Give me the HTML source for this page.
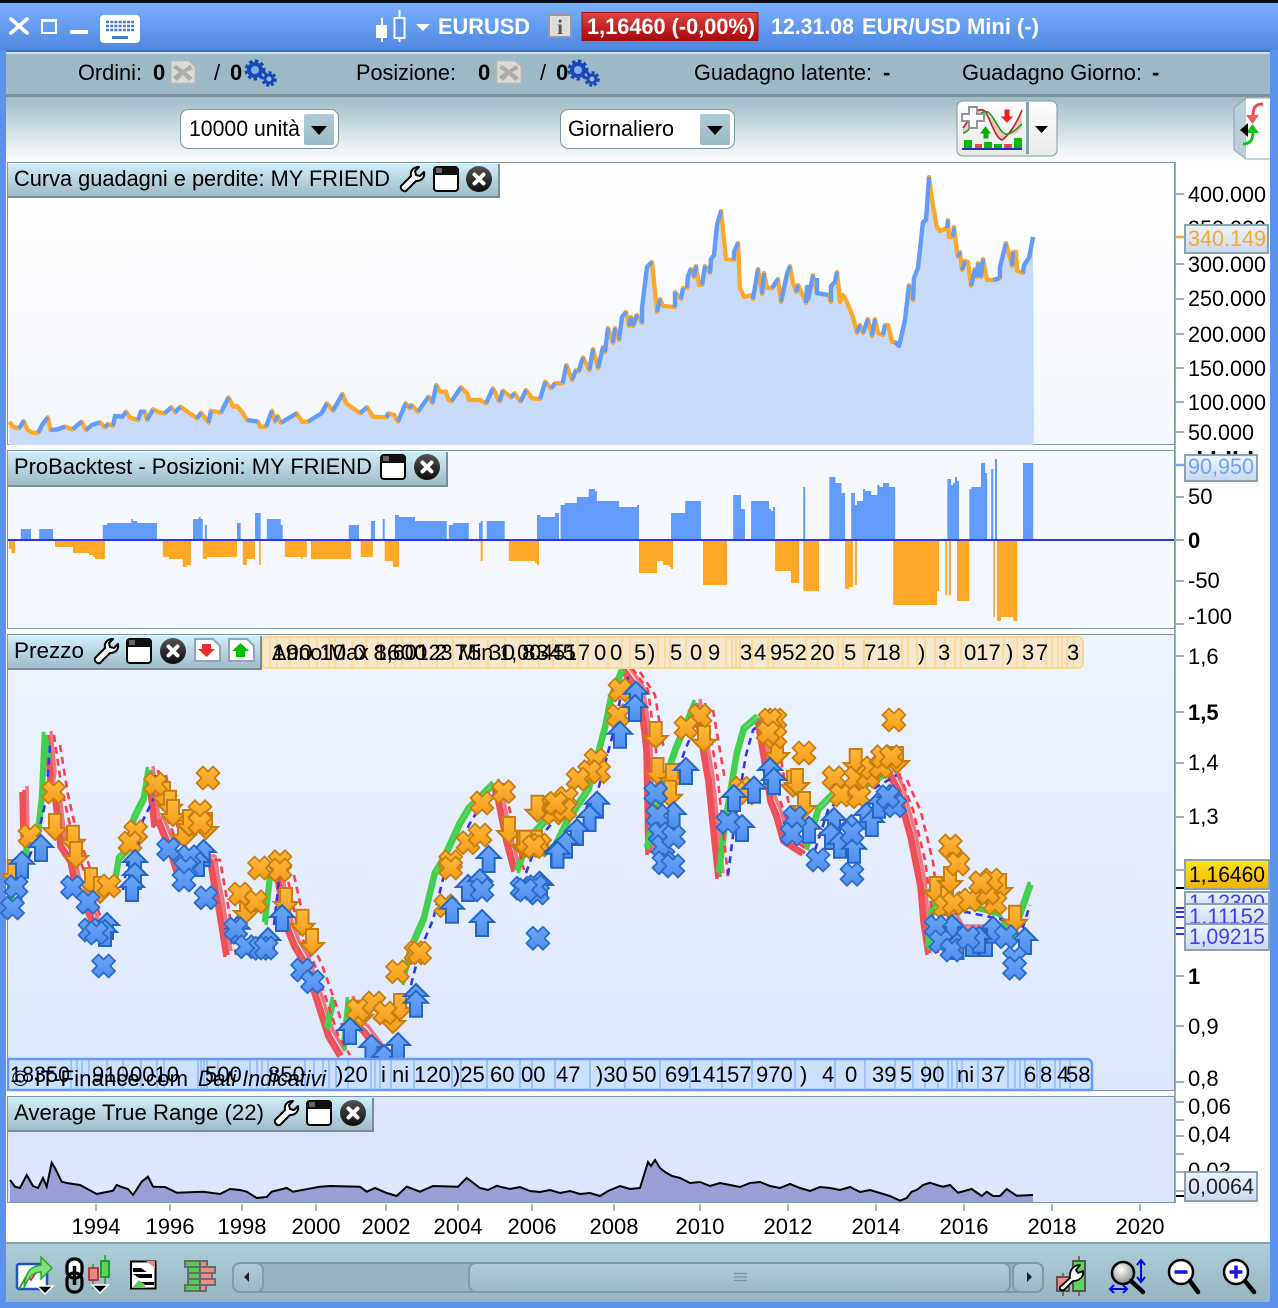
<!DOCTYPE html>
<html><head><meta charset="utf-8"><title>EURUSD</title>
<style>
html,body{margin:0;padding:0;background:#fff;width:1278px;height:1308px;overflow:hidden}
svg{display:block}
text{font-family:"Liberation Sans",sans-serif;font-size:22px;fill:#000}
.b{font-weight:bold}
.w{fill:#fff;font-weight:bold}
</style></head><body>
<svg width="1278" height="1308" viewBox="0 0 1278 1308" xmlns="http://www.w3.org/2000/svg">
<defs>
<clipPath id="cut100"><rect x="1176" y="451" width="94" height="30"/></clipPath>
<clipPath id="cutP3"><rect x="8" y="668" width="1166" height="392"/></clipPath>
<linearGradient id="gTop" x1="0" y1="0" x2="0" y2="1"><stop offset="0" stop-color="#7ab0ff"/><stop offset="1" stop-color="#5088e0"/></linearGradient>
<linearGradient id="gRow" x1="0" y1="0" x2="0" y2="1"><stop offset="0" stop-color="#9fbcc8"/><stop offset="1" stop-color="#ffffff"/></linearGradient>
<linearGradient id="gP1" x1="0" y1="0" x2="0" y2="1"><stop offset="0" stop-color="#ffffff"/><stop offset="1" stop-color="#f4f7fe"/></linearGradient>
<linearGradient id="gP3" x1="0" y1="0" x2="0" y2="1"><stop offset="0" stop-color="#edf3fe"/><stop offset="1" stop-color="#dde7fc"/></linearGradient>
<linearGradient id="gLab" x1="0" y1="0" x2="0" y2="1"><stop offset="0" stop-color="#d0eef8"/><stop offset="1" stop-color="#9dbac6"/></linearGradient>
<linearGradient id="gBot" x1="0" y1="0" x2="0" y2="1"><stop offset="0" stop-color="#adced9"/><stop offset="1" stop-color="#98b5c1"/></linearGradient>
<linearGradient id="gRed" x1="0" y1="0" x2="0" y2="1"><stop offset="0" stop-color="#e14545"/><stop offset="1" stop-color="#a80808"/></linearGradient>
<linearGradient id="gTag" x1="0" y1="0" x2="0" y2="1"><stop offset="0" stop-color="#eef4fd"/><stop offset="1" stop-color="#c9d8f0"/></linearGradient>
<linearGradient id="gYel" x1="0" y1="0" x2="0" y2="1"><stop offset="0" stop-color="#ffe41a"/><stop offset="1" stop-color="#efb200"/></linearGradient>
<linearGradient id="gBtn" x1="0" y1="0" x2="0" y2="1"><stop offset="0" stop-color="#afcbd7"/><stop offset="1" stop-color="#9ab9c6"/></linearGradient>
<linearGradient id="gInd" x1="0" y1="0" x2="0" y2="1"><stop offset="0" stop-color="#ffffff"/><stop offset="1" stop-color="#e9e9e9"/></linearGradient>
<linearGradient id="gOr" x1="0" y1="0" x2="0" y2="1"><stop offset="0" stop-color="#ffb83a"/><stop offset="1" stop-color="#f59c1a"/></linearGradient>
<linearGradient id="gBl" x1="0" y1="0" x2="0" y2="1"><stop offset="0" stop-color="#6aa6f5"/><stop offset="1" stop-color="#4f8ef0"/></linearGradient>
<linearGradient id="gClose" x1="0" y1="0" x2="0" y2="1"><stop offset="0" stop-color="#555"/><stop offset="1" stop-color="#0c0c0c"/></linearGradient>
<radialGradient id="gGlass" cx=".4" cy=".35" r=".7"><stop offset="0" stop-color="#fff"/><stop offset="1" stop-color="#888"/></radialGradient>

<path id="ox" d="M-5,-11.500 L0,-6.500 L5,-11.500 L11.500,-5 L6.500,0 L11.500,5 L5,11.500 L0,6.500 L-5,11.500 L-11.500,5 L-6.500,0 L-11.500,-5 Z" fill="url(#gOr)" stroke="#c87d10" stroke-width="1.800" stroke-linejoin="round"/>
<path id="bx" d="M-5,-11.500 L0,-6.500 L5,-11.500 L11.500,-5 L6.500,0 L11.500,5 L5,11.500 L0,6.500 L-5,11.500 L-11.500,5 L-6.500,0 L-11.500,-5 Z" fill="url(#gBl)" stroke="#2a6cc8" stroke-width="1.800" stroke-linejoin="round"/>
<path id="ua" d="M0,0 L12,12 L6,12 L6,26 L-6,26 L-6,12 L-12,12 Z" fill="url(#gBl)" stroke="#2566c4" stroke-width="2"/>
<path id="da" d="M0,0 L12,-12 L6,-12 L6,-26 L-6,-26 L-6,-12 L-12,-12 Z" fill="url(#gOr)" stroke="#c87d10" stroke-width="2"/>

<g id="wrench"><path d="M3,20 L13,10 C12,5 15,1 21,1 L17,5 L18,9 L22,10 L26,6 C27,12 23,15 18,15 L8,25 C5,26 2,23 3,20 Z" fill="#fff" stroke="#000" stroke-width="2" stroke-linejoin="round"/></g>
<g id="win"><rect x="1" y="1" width="24" height="24" rx="3" fill="#fff" stroke="#000" stroke-width="2"/><rect x="1" y="1" width="24" height="8" rx="2" fill="#111"/><rect x="1" y="7" width="24" height="2" fill="#111"/><rect x="3" y="2" width="6" height="5" fill="#666"/></g>
<g id="close"><circle cx="13" cy="13" r="13" fill="url(#gClose)"/><path d="M8.500,8.500 L17.500,17.500 M17.500,8.500 L8.500,17.500" stroke="#fff" stroke-width="4" stroke-linecap="round"/></g>
<g id="docx"><path d="M0,0 H18 L24,6 V22 H0 Z" fill="#dcdad6" stroke="#bdbbb6"/><path d="M5,4 L12,9 L19,4 L22,8 L15,11 L22,17 L18,20 L12,14 L6,20 L2,16 L8,11 L2,7 Z" fill="#aeaca8"/></g>
<g id="gears"><circle cx="8" cy="10" r="6" fill="#7fb0f0" stroke="#1848b8" stroke-width="4"/><circle cx="8" cy="10" r="9" fill="none" stroke="#1848b8" stroke-width="3" stroke-dasharray="3.500 2.500"/><circle cx="22" cy="19" r="4" fill="#8fc0f0" stroke="#1848b8" stroke-width="3"/><circle cx="22" cy="19" r="6.500" fill="none" stroke="#1848b8" stroke-width="2.500" stroke-dasharray="3 2"/></g>
<g id="tri"><path d="M0,0 H16 L8,9 Z" fill="#000"/></g>
<path id="redp" fill="none" stroke="#ef5058" stroke-width="3.500" stroke-linejoin="bevel" d="M24,790 L25,835 M48,735 L52,775 L50,790 L56,790 L60,825 L62,845 L72,860 L76,880 L85,900 L96,925 M150,770 L156,825 L160,820 L172,850 L178,870 L195,860 L212,860 L216,885 L220,905 L228,955 M278,870 L284,905 L290,930 L296,945 L305,960 L314,985 L322,1010 L330,1035 L342,1055 M350,1000 L358,1025 L365,1030 L380,1050 L395,1060 M495,783 L500,800 L503,815 L508,840 L516,870 M624,668 L640,690 L646,730 L648,750 L649,800 L650,853 M697,703 L704,745 L710,780 L714,820 L720,877 M759,718 L766,760 L772,800 L778,815 L785,840 L805,853 M891,773 L900,790 L905,810 L912,835 L917,860 L922,885 L925,920 L930,953 M946,905 L960,930 L985,930 L1013,943"/>
<path id="grnp" fill="none" stroke="#42d04e" stroke-width="3.500" stroke-linejoin="bevel" d="M12,905 L20,860 L25,870 L30,835 L38,845 L43,800 L46,735 L50,760 M115,890 L120,860 L130,850 L135,820 L145,800 L150,770 M266,925 L271,880 L278,870 M328,1030 L335,1000 M345,1050 L350,1000 M403,985 L412,950 L425,920 L436,875 L445,860 L461,825 L470,810 L495,785 M518,873 L530,840 L546,823 M555,850 L570,820 L590,790 L606,730 L612,700 L624,670 M648,850 L660,800 L677,750 L697,703 M720,875 L727,820 L738,755 L745,730 L759,718 M807,850 L820,810 L840,790 L860,790 L891,773 M929,950 L934,905 L960,905 L1000,915 L1013,940 L1025,905 L1032,885"/>
</defs>

<!-- frame -->
<rect width="1278" height="1308" fill="#5a92ec"/>
<rect width="1278" height="3" fill="#0a0f1c"/>
<rect y="3" width="1278" height="47" fill="url(#gTop)"/>
<rect x="6" y="50" width="1264" height="1252" fill="#fff"/>
<rect x="6" y="50" width="1264" height="2" fill="#3d72c8"/>
<rect x="6" y="52" width="1264" height="2" fill="#cfe3f2"/>
<rect x="6" y="54" width="1264" height="40" fill="#9cb9c5"/>
<rect x="6" y="94" width="1264" height="3" fill="#7c929c"/>
<rect x="6" y="97" width="1264" height="65" fill="url(#gRow)"/>

<!-- title bar -->
<path d="M11,19 L27,33 M27,19 L11,33" stroke="#fff" stroke-width="3.600" stroke-linecap="round"/>
<rect x="42" y="20" width="14" height="13" fill="none" stroke="#fff" stroke-width="2"/><rect x="41" y="19" width="16" height="3" fill="#fff"/>
<rect x="70" y="30" width="18" height="4" rx="1" fill="#fff"/>
<rect x="100" y="15" width="40" height="28" rx="4" fill="#fff"/>
<path d="M106,22 H134 M106,26 H134 M106,30 H134" stroke="#4878c8" stroke-width="2.400" stroke-dasharray="3 1.200"/>
<rect x="112" y="36" width="16" height="3" fill="#4878c8"/>
<path d="M382,18 V42 M399.500,10 V42" stroke="#fff" stroke-width="2"/>
<rect x="376" y="25" width="11" height="13" fill="#fff"/>
<rect x="394.500" y="18" width="10" height="20" fill="#5f94ec" stroke="#fff" stroke-width="2"/>
<path d="M416,24 H430 L423,31 Z" fill="#fff"/>
<text class="w" x="438" y="34" textLength="92" lengthAdjust="spacingAndGlyphs">EURUSD</text>
<rect x="549" y="15" width="22" height="22" fill="#dedede" stroke="#9a9a9a" stroke-width="2"/>
<text x="560" y="34" text-anchor="middle" style="font-family:'Liberation Serif',serif;font-weight:bold;font-size:21px;fill:#555">i</text>
<rect x="582" y="12.500" width="176" height="28" fill="url(#gRed)" stroke="#a01010"/>
<text class="w" x="587" y="34" textLength="168" lengthAdjust="spacingAndGlyphs">1,16460 (-0,00%)</text>
<text class="w" x="771" y="34" textLength="83" lengthAdjust="spacingAndGlyphs">12.31.08</text>
<text class="w" x="862" y="34" textLength="177" lengthAdjust="spacingAndGlyphs">EUR/USD Mini (-)</text>

<!-- status row -->
<text x="78" y="80" textLength="64" lengthAdjust="spacingAndGlyphs">Ordini:</text>
<text class="b" x="153" y="80">0</text>
<use href="#docx" x="171" y="61"/>
<text x="214" y="80">/</text>
<text class="b" x="230" y="80">0</text>
<use href="#gears" x="247" y="60"/>
<text x="356" y="80" textLength="100" lengthAdjust="spacingAndGlyphs">Posizione:</text>
<text class="b" x="478" y="80">0</text>
<use href="#docx" x="497" y="61"/>
<text x="540" y="80">/</text>
<text class="b" x="556" y="80">0</text>
<use href="#gears" x="570" y="60"/>
<text x="694" y="80" textLength="178" lengthAdjust="spacingAndGlyphs">Guadagno latente:</text>
<text class="b" x="883" y="80">-</text>
<text x="962" y="80" textLength="180" lengthAdjust="spacingAndGlyphs">Guadagno Giorno:</text>
<text class="b" x="1152" y="80">-</text>

<!-- selectors -->
<rect x="180.500" y="109.500" width="158" height="39" rx="8" fill="#fff" stroke="#7d98a5"/>
<text x="189" y="136" textLength="111" lengthAdjust="spacingAndGlyphs">10000 unità</text>
<rect x="304" y="114" width="30" height="31" rx="2" fill="url(#gBtn)"/>
<use href="#tri" x="311" y="126"/>
<rect x="560.500" y="109.500" width="174" height="39" rx="8" fill="#fff" stroke="#7d98a5"/>
<text x="568" y="136" textLength="106" lengthAdjust="spacingAndGlyphs">Giornaliero</text>
<rect x="700" y="114" width="30" height="31" rx="2" fill="url(#gBtn)"/>
<use href="#tri" x="707" y="126"/>

<!-- indicator button -->
<rect x="957" y="101" width="100" height="55" rx="6" fill="url(#gInd)" stroke="#7d98a5"/>
<rect x="1026" y="102" width="3" height="52" fill="#86a0ac"/>
<path d="M1035,126 H1048 L1041.500,133 Z" fill="#000"/>
<path d="M963,128 C972,115 978,105 986,112 C992,125 996,138 1002,140 C1008,136 1016,125 1022,110 L1022,128 C1012,140 1004,136 996,122 C988,110 975,118 963,134 Z" fill="#f3c4bd"/>
<path d="M963,128 C972,115 978,105 986,112 C992,125 996,138 1002,140 C1008,136 1016,125 1022,110" fill="none" stroke="#b02828" stroke-width="1.600"/>
<path d="M963,133 C972,132 978,108 988,112 C996,118 1000,136 1008,134 C1014,132 1018,128 1022,124" fill="none" stroke="#16a516" stroke-width="1.600"/>
<path d="M969,107 H977 V114 H984 V121 H977 V128 H969 V121 H962 V114 H969 Z" fill="#fff" stroke="#8e979c" stroke-width="2"/>
<path d="M1005,110 V117 H1002 L1007,122 L1012,117 H1009 V110 Z" fill="#ef2020" stroke="#ef2020"/>
<path d="M985.500,127 L981,133 H984 V138 H988 V133 H990 Z" fill="#0aaa0a" stroke="#0aaa0a"/>
<rect x="964" y="140" width="8" height="8" fill="#0ab80a"/><rect x="975" y="144" width="7" height="4" fill="#e04848"/><rect x="984" y="142" width="8" height="6" fill="#0ab80a"/><rect x="994" y="144" width="8" height="4" fill="#0ab80a"/><rect x="1004" y="144" width="8" height="4" fill="#e04848"/><rect x="1014" y="138" width="8" height="10" fill="#0ab80a"/>
<rect x="962" y="148" width="60" height="2" fill="#2030c8"/>

<!-- right toggler -->
<path d="M1270,98 H1246 L1234,108 V150 L1246,159 H1270 Z" fill="#fff"/>
<path d="M1246,98 L1234,108 V150 L1246,159 Z" fill="#b9d0da"/>
<path d="M1246,98 L1234,108 V150 L1246,159 H1270 M1246,98 H1270" fill="none" stroke="#8ea6b0"/>
<path d="M1263,104 C1255,104 1253,108 1253,116" fill="none" stroke="#f04848" stroke-width="3"/>
<path d="M1246,115 H1259 L1252.500,124 Z" fill="#f05a5a"/>
<path d="M1246,133 H1259 L1252.500,124 Z" fill="#17c017"/>
<path d="M1253,132 C1253,140 1250,144 1243,144" fill="none" stroke="#17c017" stroke-width="3"/>
<path d="M1240,130 L1248,123 V137 Z" fill="#000"/>

<!-- Panel 1 -->
<rect x="7.500" y="162.500" width="1167" height="282" fill="url(#gP1)" stroke="#7b98a3"/>
<path d="M9,445 L9.600,421.700 13.400,427.300 19,428.300 23.700,421 27.600,430 32.500,432.700 38.300,432.700 42,425 47.800,417.300 50.500,430 57.400,429.300 65,426.700 72.700,429.300 81.500,421.700 86,430 92,425 100,422.300 105,427.300 108,424 113,426 115,416 122.500,416.700 126,411.700 130,417.700 138,420 141,411.700 145,411.700 147,420 153,409.300 159,412.300 164.600,413.300 171.400,407.300 175,412.300 180.600,406.700 187.500,411.700 197,418.300 201,412.700 208.600,422.700 211,410.700 221,412.700 228.500,397.300 233.400,406.700 237,406 243,413.300 247,420 258,421.700 260,426.700 266,426.700 272,410.700 275,421.700 277.500,416 281,422.700 296.600,413.300 302,421.700 308,421.700 321.500,413.300 327,403.300 333,410.700 342.500,394 346,403.300 360,413.300 367,407.300 373,416.700 386.500,417.300 388.400,413.300 394,415 398,421.700 405.700,403.300 409.500,408.300 411.400,405 418,411.700 425,401.700 428.600,396.700 432.400,403.300 436.300,385 440,391.700 446,391.700 448.500,400 451.600,401 461,387.300 467,393.300 469,400 480,400 486,403.300 493,388.300 499.400,401.700 503,390.700 511,397.300 514.700,393.300 520.500,401.700 526,390 532,398.300 540,399 545.300,381.700 551,388.300 555,383.300 562.600,383.300 566.400,365 572,380 576,370 578.600,371.700 583,357.300 589.400,370 593,349 598,368 603,347 605,352 608,328 613,343 615,328 619,340 622,317 626,312 629,326 631,317 633,326 637,315 642,323 642,308 647,267 652,262 657,312 660,299 663,306 675,307 675,292 681,299 683,288 687,288 688,276 691,269 694,277 696,266 699,285 702,285 705,266 710,273 711,259 714,255 717,225 721,211 726,259 734,260 734,252 738,243 740,288 744,297 752,295 753,299 758,269 762,294 764,273 767,288 772,288 778,279 781,302 787,274 790,266 793,283 796,292 798,285 806,303 807,287 809,287 808,300 813,275 817,293 828,295 831,302 831,286 835,282 837,272 840,302 843,295 847,302 853,317 857,333 860,325 863,333 868,319 872,336 875,319 878,333 883,335 885,325 888,325 892,342 895,342 899,346 905,320 909,285 913,300 914,278 918,268 923,222 926,220 929,177 932,200 937,228 940,231 947,228 948,220 949,237 953,237 954,227 957,252 958,257 960,252 962,270 965,261 968,262 971,286 975,269 977,277 978,263 981,277 983,259 987,280 993,280 1000,278 1000,267 1003,255 1006,243 1012,266 1013,252 1016,252 1017,271 1023,273 1024,265 1029,258 1033,237 L1034,445 Z" fill="#c8dbfb"/>
<polyline fill="none" stroke="#ffa726" stroke-width="4.300" stroke-linejoin="round" points="9.600,421.700 13.400,427.300 19,428.300 23.700,421 27.600,430 32.500,432.700 38.300,432.700 42,425 47.800,417.300 50.500,430 57.400,429.300 65,426.700 72.700,429.300 81.500,421.700 86,430 92,425 100,422.300 105,427.300 108,424 113,426 115,416 122.500,416.700 126,411.700 130,417.700 138,420 141,411.700 145,411.700 147,420 153,409.300 159,412.300 164.600,413.300 171.400,407.300 175,412.300 180.600,406.700 187.500,411.700 197,418.300 201,412.700 208.600,422.700 211,410.700 221,412.700 228.500,397.300 233.400,406.700 237,406 243,413.300 247,420 258,421.700 260,426.700 266,426.700 272,410.700 275,421.700 277.500,416 281,422.700 296.600,413.300 302,421.700 308,421.700 321.500,413.300 327,403.300 333,410.700 342.500,394 346,403.300 360,413.300 367,407.300 373,416.700 386.500,417.300 388.400,413.300 394,415 398,421.700 405.700,403.300 409.500,408.300 411.400,405 418,411.700 425,401.700 428.600,396.700 432.400,403.300 436.300,385 440,391.700 446,391.700 448.500,400 451.600,401 461,387.300 467,393.300 469,400 480,400 486,403.300 493,388.300 499.400,401.700 503,390.700 511,397.300 514.700,393.300 520.500,401.700 526,390 532,398.300 540,399 545.300,381.700 551,388.300 555,383.300 562.600,383.300 566.400,365 572,380 576,370 578.600,371.700 583,357.300 589.400,370 593,349 598,368 603,347 605,352 608,328 613,343 615,328 619,340 622,317 626,312 629,326 631,317 633,326 637,315 642,323 642,308 647,267 652,262 657,312 660,299 663,306 675,307 675,292 681,299 683,288 687,288 688,276 691,269 694,277 696,266 699,285 702,285 705,266 710,273 711,259 714,255 717,225 721,211 726,259 734,260 734,252 738,243 740,288 744,297 752,295 753,299 758,269 762,294 764,273 767,288 772,288 778,279 781,302 787,274 790,266 793,283 796,292 798,285 806,303 807,287 809,287 808,300 813,275 817,293 828,295 831,302 831,286 835,282 837,272 840,302 843,295 847,302 853,317 857,333 860,325 863,333 868,319 872,336 875,319 878,333 883,335 885,325 888,325 892,342 895,342 899,346 905,320 909,285 913,300 914,278 918,268 923,222 926,220 929,177 932,200 937,228 940,231 947,228 948,220 949,237 953,237 954,227 957,252 958,257 960,252 962,270 965,261 968,262 971,286 975,269 977,277 978,263 981,277 983,259 987,280 993,280 1000,278 1000,267 1003,255 1006,243 1012,266 1013,252 1016,252 1017,271 1023,273 1024,265 1029,258 1033,237"/>
<path fill="none" stroke="#619cfc" stroke-width="4.300" stroke-linejoin="round" d="M19,428.300 L23.700,421 M38.300,432.700 L42,425 47.800,417.300 M50.500,430 L57.400,429.300 65,426.700 M72.700,429.300 L81.500,421.700 M86,430 L92,425 100,422.300 M105,427.300 L108,424 M113,426 L115,416 122.500,416.700 126,411.700 M138,420 L141,411.700 145,411.700 M147,420 L153,409.300 M164.600,413.300 L171.400,407.300 M175,412.300 L180.600,406.700 M197,418.300 L201,412.700 M208.600,422.700 L211,410.700 M221,412.700 L228.500,397.300 M247,420 L258,421.700 M266,426.700 L272,410.700 M275,421.700 L277.500,416 M281,422.700 L296.600,413.300 M308,421.700 L321.500,413.300 327,403.300 M333,410.700 L342.500,394 M360,413.300 L367,407.300 M386.500,417.300 L388.400,413.300 M398,421.700 L405.700,403.300 M409.500,408.300 L411.400,405 M418,411.700 L425,401.700 428.600,396.700 M432.400,403.300 L436.300,385 M451.600,401 L461,387.300 M486,403.300 L493,388.300 M499.400,401.700 L503,390.700 M511,397.300 L514.700,393.300 M520.500,401.700 L526,390 M540,399 L545.300,381.700 M551,388.300 L555,383.300 M562.600,383.300 L566.400,365 M572,380 L576,370 M578.600,371.700 L583,357.300 M589.400,370 L593,349 M598,368 L603,347 M605,352 L608,328 M613,343 L615,328 M619,340 L622,317 626,312 M629,326 L631,317 M633,326 L637,315 M642,323 L642,308 647,267 652,262 M657,312 L660,299 M675,307 L675,292 M681,299 L683,288 M687,288 L688,276 691,269 M694,277 L696,266 M702,285 L705,266 M710,273 L711,259 714,255 717,225 721,211 M734,260 L734,252 738,243 M753,299 L758,269 M762,294 L764,273 M772,288 L778,279 M781,302 L787,274 790,266 M796,292 L798,285 M806,303 L807,287 809,287 M808,300 L813,275 M817,278 L817,293 828,295 M831,302 L831,286 835,282 837,272 M857,333 L860,325 M863,333 L868,319 M872,336 L875,319 M883,335 L885,325 M895,342 L899,346 905,320 909,285 M913,300 L914,278 918,268 923,222 926,220 929,177 M947,228 L948,220 M953,237 L954,227 M958,257 L960,252 M962,270 L965,261 M971,286 L975,269 M977,277 L978,263 M981,277 L983,259 M993,280 L1000,278 M1000,278 L1000,267 1003,255 1006,243 M1012,266 L1013,252 M1023,273 L1024,265 1029,258 1033,237"/>

<!-- Panel 2 -->
<rect x="7.500" y="450.500" width="1167" height="178" fill="#f5f8ff" stroke="#7b98a3"/>
<path fill="#619cfc" d="M20.800,540V529H31V540Z M39.200,540V529H53V540Z M102.800,540V525H107V523H131.400V519H133V521H137V523H157V540Z M193,540V519H198.700V517H200.700V519H202.800V540Z M204.800,540V525H206.900V540Z M237,540V523H240.700V540Z M255,540V513H260.700V540Z M266.800,540V519H280.700V525H282.700V540Z M348.800,540V525H359V540Z M370.900,540V521H375V540Z M382.700,540V519H384.700V540Z M395,540V515H399V517H415V521H446.800V540Z M448.800,540V525H452.900V523H468.800V540Z M479,540V523H480.600V521H482.700V540Z M486.700,540V521H504.700V540Z M537,540V515H540.600V517H554.900V513H559V540Z M560.600,540V505H564.700V503H576.900V497H588.700V489H594.900V491H596.900V501H619V507H637V505H639V540Z M671,540V513H685.200V501H701V540Z M733.200,540V495H741V509H745V540Z M751.100,540V501H769V509H771V511H773V507H775.100V540Z M803.200,540V487H805.200V540Z M829.300,540V477H835.400V483H841.500V493H845.100V540Z M851.200,540V493H854.900V505H856.900V501H863V489H865V491H871.200V495H877.300V485H879.300V487H883V483H889.100V487H895.200V540Z M947.300,540V479H951V485H953V483H955V477H957V481H959V540Z M969.300,540V489H971.300V487H981V463H985.100V473H987.200V540Z M991.200,540V469H993.300V540Z M994.900,540V459H997V540Z M1023,540V463H1033.200V540Z"/>
<path fill="#ffa726" d="M9,540V549H11.400V553H15.100V540Z M55,540V547H73V553H89V555H93V557H95V559H104.900V540Z M162.800,540V557H168.900V559H182.800V567H186.900V565H190.900V540Z M202.800,540V559H206.900V557H237V540Z M242.800,540V565H246.800V559H255V540Z M259,540V565H260.700V540Z M284.800,540V557H301V559H302.700V557H306.800V540Z M310.900,540V559H350.900V540Z M360.700,540V557H372.900V540Z M384.700,540V561H392.900V567H399V540Z M480.600,540V561H482.700V540Z M508.800,540V561H534.900V563H537V565H539V540Z M639,540V573H657V561H663.200V565H669.300V567H671V569H673V540Z M703,540V585H727.100V540Z M775.100,540V571H791V583H799.100V540Z M803.200,540V591H819.100V540Z M845.100,540V589H849.200V587H852.900V540Z M854.900,540V585H856.900V540Z M893.200,540V605H937.100V591H939.100V540Z M945.300,540V595H947.300V540Z M948.900,540V595H951V540Z M957,540V601H969.300V540Z M993.300,540V617H994.900V540Z M997,540V621H1001V617H1013.200V621H1017.300V540Z"/>
<rect x="8" y="539" width="1166" height="2" fill="#3232dc"/>

<!-- Panel 3 -->
<rect x="7.500" y="634.500" width="1167" height="456" fill="url(#gP3)" stroke="#7b98a3"/>
<g clip-path="url(#cutP3)">
<use href="#redp"/><use href="#redp" x="-3" y="2"/><use href="#redp" x="3" y="-4" opacity=".75"/>
<use href="#grnp"/><use href="#grnp" x="-2.500" y="-3"/>
<path fill="none" stroke="#ff3b4c" stroke-width="2.600" stroke-dasharray="7 5" d="M54,735 L62,790 L70,825 L80,860 L94,900 L104,925 M158,770 L168,820 L180,850 L203,860 L220,860 L228,905 L236,955 M286,870 L298,930 L313,960 L330,1010 L338,1035 L350,1055 M503,783 L511,815 L524,870 M632,668 L648,690 L656,750 L658,853 M705,703 L718,780 L728,877 M767,718 L780,800 L793,840 L813,853 M899,773 L913,810 L925,860 L933,920 L938,953 M1060,0"/>
<path fill="none" stroke="#ff3b4c" stroke-width="2.600" stroke-dasharray="7 5" d="M60,745 L68,795 L76,830 L88,862 L100,900 M166,775 L175,820 L188,852 M294,875 L306,930 L322,965 L338,1010 L346,1040 M640,672 L655,695 L664,750 M713,710 L725,780 M775,725 L788,800 L800,840 M907,780 L921,812 L933,862 L940,920"/>
<path fill="none" stroke="#3434ea" stroke-width="2.600" stroke-dasharray="7 5" d="M20,905 L28,860 L38,835 L46,800 L50,745 M123,890 L128,860 L138,850 L143,820 L153,800 L156,775 M274,925 L279,880 L286,870 M411,985 L420,950 L433,920 L444,875 L453,860 L469,825 L478,810 L501,788 M526,873 L538,840 L552,823 M563,850 L578,820 L598,790 L614,730 L620,700 L630,672 M656,850 L668,800 L685,750 L703,708 M728,875 L735,820 L746,755 L753,730 L765,720 M815,850 L828,810 L848,792 L868,792 L897,775 M940,915 L966,912 L1005,920 L1020,936 L1030,905"/>
</g>

<!-- orange down arrows -->
<g>
<use href="#da" x="13.600" y="886"/><use href="#da" x="55" y="840"/><use href="#da" x="73" y="851.700"/><use href="#da" x="76" y="868"/><use href="#da" x="91" y="894"/><use href="#da" x="100" y="903"/><use href="#da" x="164" y="808"/><use href="#da" x="170" y="816.700"/><use href="#da" x="173" y="826"/><use href="#da" x="184" y="846.700"/><use href="#da" x="189" y="836"/><use href="#da" x="206" y="839"/><use href="#da" x="246" y="923"/><use href="#da" x="286" y="914"/><use href="#da" x="302.500" y="935.700"/><use href="#da" x="312" y="955"/><use href="#da" x="361" y="1026.700"/><use href="#da" x="393" y="1033"/><use href="#da" x="400" y="1020"/><use href="#da" x="509" y="843"/><use href="#da" x="523" y="856.700"/><use href="#da" x="536" y="856.700"/><use href="#da" x="537.500" y="821.700"/><use href="#da" x="525.400" y="856.700"/><use href="#da" x="655.700" y="748"/><use href="#da" x="657.500" y="784"/><use href="#da" x="672" y="790"/><use href="#da" x="670" y="806.700"/><use href="#da" x="704" y="751.700"/><use href="#da" x="777" y="765"/><use href="#da" x="793" y="796.700"/><use href="#da" x="797" y="795"/><use href="#da" x="804" y="818"/><use href="#da" x="855.700" y="775"/><use href="#da" x="897" y="773"/><use href="#da" x="936" y="903"/><use href="#da" x="947" y="913"/><use href="#da" x="950" y="893"/><use href="#da" x="1000" y="900"/><use href="#da" x="991" y="909"/><use href="#da" x="1015" y="931.700"/>
</g>
<!-- orange X -->
<g>
<use href="#ox" x="30" y="836"/><use href="#ox" x="53.600" y="792"/><use href="#ox" x="155.400" y="784"/><use href="#ox" x="208" y="778"/><use href="#ox" x="135.700" y="831.700"/><use href="#ox" x="130" y="843"/><use href="#ox" x="200" y="811.700"/><use href="#ox" x="200" y="823"/><use href="#ox" x="109" y="886"/><use href="#ox" x="259.600" y="868"/><use href="#ox" x="280" y="861.700"/><use href="#ox" x="280" y="870"/><use href="#ox" x="240" y="894"/><use href="#ox" x="256" y="901.700"/><use href="#ox" x="358" y="1010"/><use href="#ox" x="374" y="1003"/><use href="#ox" x="385" y="1013"/><use href="#ox" x="397.500" y="971.700"/><use href="#ox" x="416" y="952.700"/><use href="#ox" x="419.600" y="953"/><use href="#ox" x="445.700" y="905.700"/><use href="#ox" x="450.700" y="861.700"/><use href="#ox" x="450.700" y="868"/><use href="#ox" x="468" y="842.700"/><use href="#ox" x="480" y="835"/><use href="#ox" x="482" y="803"/><use href="#ox" x="503.600" y="791.700"/><use href="#ox" x="553.600" y="805"/><use href="#ox" x="553.600" y="813"/><use href="#ox" x="620" y="690"/><use href="#ox" x="618" y="715.700"/><use href="#ox" x="700" y="715.700"/><use href="#ox" x="686" y="727.700"/><use href="#ox" x="775" y="720"/><use href="#ox" x="770" y="720"/><use href="#ox" x="775" y="736.700"/><use href="#ox" x="768" y="732.700"/><use href="#ox" x="804" y="753"/><use href="#ox" x="894" y="720"/><use href="#ox" x="834" y="777.700"/><use href="#ox" x="841.400" y="795"/><use href="#ox" x="855.700" y="778"/><use href="#ox" x="859" y="796.700"/><use href="#ox" x="868" y="776.700"/><use href="#ox" x="872" y="768"/><use href="#ox" x="880.700" y="766.700"/><use href="#ox" x="882.500" y="756.700"/><use href="#ox" x="891.400" y="756.700"/><use href="#ox" x="596" y="760"/><use href="#ox" x="598.600" y="771.700"/><use href="#ox" x="589.600" y="771.700"/><use href="#ox" x="578" y="779.300"/><use href="#ox" x="566.400" y="798.300"/><use href="#ox" x="564.600" y="810"/><use href="#ox" x="555.700" y="803.300"/><use href="#ox" x="539.600" y="845"/><use href="#ox" x="534" y="846.700"/><use href="#ox" x="741.400" y="788.300"/><use href="#ox" x="746.800" y="793"/><use href="#ox" x="950.400" y="846"/><use href="#ox" x="958" y="864"/><use href="#ox" x="945" y="906.700"/><use href="#ox" x="954" y="903.300"/><use href="#ox" x="970" y="900"/><use href="#ox" x="995" y="903.300"/><use href="#ox" x="988" y="893"/><use href="#ox" x="991.400" y="880"/><use href="#ox" x="980.700" y="882.700"/>
</g>
<!-- blue up arrows -->
<g>
<use href="#ua" x="22" y="851.700"/><use href="#ua" x="41" y="835"/><use href="#ua" x="135" y="850"/><use href="#ua" x="135" y="863"/><use href="#ua" x="132" y="875"/><use href="#ua" x="203.600" y="840"/><use href="#ua" x="198" y="850"/><use href="#ua" x="282" y="905"/><use href="#ua" x="107" y="913"/><use href="#ua" x="105" y="920"/><use href="#ua" x="237.500" y="916.700"/><use href="#ua" x="268" y="928"/><use href="#ua" x="350" y="1018"/><use href="#ua" x="371.400" y="1035"/><use href="#ua" x="384" y="1045"/><use href="#ua" x="398" y="1033"/><use href="#ua" x="416" y="984"/><use href="#ua" x="416" y="990.700"/><use href="#ua" x="468" y="875"/><use href="#ua" x="480" y="869.300"/><use href="#ua" x="482" y="910"/><use href="#ua" x="488.600" y="846"/><use href="#ua" x="452" y="896.700"/><use href="#ua" x="541" y="873"/><use href="#ua" x="557" y="840"/><use href="#ua" x="636" y="681.700"/><use href="#ua" x="635" y="695"/><use href="#ua" x="620" y="721.700"/><use href="#ua" x="686" y="758"/><use href="#ua" x="734" y="785"/><use href="#ua" x="742" y="815"/><use href="#ua" x="754" y="776.700"/><use href="#ua" x="770" y="758"/><use href="#ua" x="774" y="768"/><use href="#ua" x="597" y="791.700"/><use href="#ua" x="589.600" y="805"/><use href="#ua" x="577" y="819"/><use href="#ua" x="566" y="831.700"/><use href="#ua" x="557.500" y="841.700"/><use href="#ua" x="539.600" y="871.700"/><use href="#ua" x="834" y="808"/><use href="#ua" x="831" y="823"/><use href="#ua" x="840" y="831.700"/><use href="#ua" x="854" y="836.700"/><use href="#ua" x="851.400" y="815"/><use href="#ua" x="866.400" y="803"/><use href="#ua" x="871.800" y="810"/><use href="#ua" x="879" y="791.700"/><use href="#ua" x="889.600" y="785"/><use href="#ua" x="809" y="816.700"/><use href="#ua" x="673.600" y="802"/><use href="#ua" x="952" y="915"/><use href="#ua" x="957.500" y="933"/><use href="#ua" x="972" y="930"/><use href="#ua" x="986" y="930"/><use href="#ua" x="993" y="916.700"/><use href="#ua" x="979" y="926.700"/><use href="#ua" x="1025" y="928"/>
</g>
<!-- blue X -->
<g>
<use href="#bx" x="16" y="886.700"/><use href="#bx" x="12.500" y="908"/><use href="#bx" x="72.500" y="887.300"/><use href="#bx" x="88" y="902.300"/><use href="#bx" x="90" y="930"/><use href="#bx" x="96.400" y="933"/><use href="#bx" x="103.600" y="966"/><use href="#bx" x="168.600" y="849.300"/><use href="#bx" x="189" y="856.700"/><use href="#bx" x="185.700" y="868.300"/><use href="#bx" x="184" y="880"/><use href="#bx" x="206" y="897.700"/><use href="#bx" x="235.700" y="929"/><use href="#bx" x="246.400" y="946.700"/><use href="#bx" x="260.700" y="948.300"/><use href="#bx" x="266" y="948"/><use href="#bx" x="302.500" y="970"/><use href="#bx" x="312.500" y="981.700"/><use href="#bx" x="482" y="890"/><use href="#bx" x="522" y="888.300"/><use href="#bx" x="537.500" y="893"/><use href="#bx" x="535.700" y="886.700"/><use href="#bx" x="525.400" y="890"/><use href="#bx" x="537.900" y="938.300"/><use href="#bx" x="655.700" y="793.300"/><use href="#bx" x="657.500" y="815.700"/><use href="#bx" x="660" y="834"/><use href="#bx" x="662.900" y="846.700"/><use href="#bx" x="673.600" y="836.700"/><use href="#bx" x="664" y="862.700"/><use href="#bx" x="672.900" y="866"/><use href="#bx" x="727.900" y="822.300"/><use href="#bx" x="795" y="817.700"/><use href="#bx" x="792" y="834"/><use href="#bx" x="818" y="860"/><use href="#bx" x="852" y="874.300"/><use href="#bx" x="852" y="833"/><use href="#bx" x="895" y="805.700"/><use href="#bx" x="887.900" y="796.700"/><use href="#bx" x="936" y="926.700"/><use href="#bx" x="940.700" y="941.700"/><use href="#bx" x="952" y="950"/><use href="#bx" x="968" y="937.700"/><use href="#bx" x="1006" y="936.700"/><use href="#bx" x="1014.600" y="958.300"/><use href="#bx" x="1014.600" y="968.300"/>
</g>

<!-- top orange tag row -->
<rect x="262" y="637" width="821" height="31" rx="5" fill="#f5e7cb" stroke="#fbd890" stroke-width="2"/>
<path fill="none" stroke="#f9d693" stroke-width="1.500" d="M270,638V667 M277,638V667 M290,638V667 M309,638V667 M317,638V667 M329,638V667 M335,638V667 M352,638V667 M366,638V667 M378,638V667 M395,638V667 M402,638V667 M420,638V667 M437,638V667 M453,638V667 M470,638V667 M488,638V667 M505,638V667 M520,638V667 M539,638V667 M553,638V667 M570,638V667 M578,638V667 M588,638V667 M608,638V667 M622,638V667 M630,638V667 M648,638V667 M658,638V667 M665,638V667 M670,638V667 M686,638V667 M704,638V667 M726,638V667 M732,638V667 M736,638V667 M740,638V667 M752,638V667 M768,638V667 M773,638V667 M806,638V667 M818,638V667 M838,638V667 M843,638V667 M864,638V667 M868,638V667 M902,638V667 M908,638V667 M917,638V667 M925,638V667 M935,638V667 M945,638V667 M955,638V667 M961,638V667 M1003,638V667 M1017,638V667 M1024,638V667 M1046,638V667 M1052,638V667 M1058,638V667 M1062,638V667 M1067,638V667 M1074,638V667"/>
<text x="272" y="660" textLength="305" lengthAdjust="spacingAndGlyphs">Anno:Max 1,60123 Min 1,00451</text>
<text x="272" y="660" textLength="304" lengthAdjust="spacingAndGlyphs">190 10 0 8600 2 75 30 8345</text>
<text x="578" y="660">7</text><text x="594" y="660">0</text><text x="610" y="660">0</text><text x="634" y="660">5</text><text x="648" y="660">)</text><text x="670" y="660">5</text><text x="690" y="660">0</text><text x="708" y="660">9</text><text x="740" y="660">3</text><text x="754" y="660">4</text><text x="770" y="660">952</text><text x="810" y="660">20</text><text x="844" y="660">5</text><text x="864" y="660">718</text><text x="918" y="660">)</text><text x="938" y="660">3</text><text x="964" y="660">017</text><text x="1006" y="660">)</text><text x="1022" y="660">3</text><text x="1036" y="660">7</text><text x="1067" y="660">3</text>

<!-- bottom blue tag row -->
<path d="M8,1059 H1086 Q1092,1059 1092,1065 V1090 H8 Z" fill="#cbe0ff" stroke="#659bf2" stroke-width="2.500"/>
<path fill="none" stroke="#8fb9fb" stroke-width="1.500" d="M71,1060V1090 M77,1060V1090 M82,1060V1090 M89,1060V1090 M107,1060V1090 M123,1060V1090 M141,1060V1090 M157,1060V1090 M164,1060V1090 M198,1060V1090 M201,1060V1090 M204,1060V1090 M207,1060V1090 M218,1060V1090 M250,1060V1090 M257,1060V1090 M262,1060V1090 M268,1060V1090 M305,1060V1090 M314,1060V1090 M323,1060V1090 M329,1060V1090 M336,1060V1090 M348,1060V1090 M371,1060V1090 M375,1060V1090 M380,1060V1090 M391,1060V1090 M414,1060V1090 M452,1060V1090 M461,1060V1090 M487,1060V1090 M520,1060V1090 M532,1060V1090 M555,1060V1090 M590,1060V1090 M625,1060V1090 M660,1060V1090 M690,1060V1090 M722,1060V1090 M752,1060V1090 M795,1060V1090 M835,1060V1090 M865,1060V1090 M895,1060V1090 M913,1060V1090 M925,1060V1090 M938,1060V1090 M948,1060V1090 M952,1060V1090 M957,1060V1090 M962,1060V1090 M978,1060V1090 M1008,1060V1090 M1015,1060V1090 M1020,1060V1090 M1025,1060V1090 M1037,1060V1090 M1040,1060V1090 M1055,1060V1090 M1060,1060V1090 M1070,1060V1090"/>
<text x="10" y="1082" textLength="60" lengthAdjust="spacingAndGlyphs">18350</text><text x="92" y="1082">910</text><text x="130" y="1082">0010</text><text x="205" y="1082">500</text><text x="268" y="1082">850</text><text x="336" y="1082">)20</text><text x="381" y="1082">i</text><text x="392" y="1082">ni</text><text x="414" y="1082">120</text><text x="453" y="1082">)25</text><text x="490" y="1082">60</text><text x="521" y="1082">00</text><text x="556" y="1082">47</text><text x="596" y="1082">)30</text><text x="632" y="1082">50</text><text x="665" y="1082">691</text><text x="703" y="1082">41</text><text x="727" y="1082">57</text><text x="756" y="1082">970</text><text x="800" y="1082">)</text><text x="822" y="1082">4</text><text x="845" y="1082">0</text><text x="872" y="1082">39</text><text x="900" y="1082">5</text><text x="920" y="1082">90</text><text x="957" y="1082">ni</text><text x="981" y="1082">37</text><text x="1024" y="1082">6</text><text x="1040" y="1082">8</text><text x="1057" y="1082">4</text><text x="1066" y="1082">58</text>
<text x="12" y="1086" textLength="176" lengthAdjust="spacingAndGlyphs">© IT-Finance.com</text>
<text x="198" y="1086" textLength="128" lengthAdjust="spacingAndGlyphs" font-style="italic">Dati Indicativi</text>

<!-- Panel 4 -->
<rect x="7.500" y="1096.500" width="1167" height="106" fill="#dde6fd" stroke="#7b98a3"/>
<path d="M10,1202 V1180 L15,1186.700 20,1188 26.700,1175 33,1186 38,1188 43,1178 46.700,1186.700 51.700,1162.700 55,1168 61.700,1181.700 66.700,1183 80,1185 96.700,1194 113,1190.700 116.700,1185 121.700,1187 128,1189 133,1195 141.700,1181.700 148,1176.700 153,1186.700 165,1187 176.700,1192.700 203,1191.700 220,1194 230,1189 240,1190 246.700,1191.700 256.700,1198 266.700,1197 271.700,1191.700 286.700,1188 293,1191.700 320,1186.700 330,1186 360,1186.700 366.700,1191.700 375,1188 386.700,1193 396.700,1196 406.700,1186.700 420,1191.700 433,1186 458,1186.700 466.700,1178 480,1188 488,1190 497,1185.700 500,1186.700 510,1189 520,1187 530,1191 540,1192 550,1190 560,1193 570,1191 580,1194 590,1193 600,1196 608,1191 620,1186 630,1189 640,1188 644,1175 648,1162 651,1166 655,1160 660,1168 665,1172 672,1176 680,1178 690,1183 700,1182 710,1186 720,1183 730,1185 740,1187 750,1183 760,1182 770,1186 780,1188 790,1184 800,1188 810,1191 820,1187 830,1188 840,1190 850,1187 860,1192 870,1190 880,1193 890,1196 900,1200.700 906.700,1198 911.700,1191.700 916.700,1190 923,1185 930,1182.700 936.700,1185 943,1186.700 950,1185 958,1192.700 971.700,1189 981.700,1196 986.700,1191.700 993,1196 1000,1196 1006.700,1189 1016.700,1195.700 1033,1195 V1202 Z" fill="#9b9fd8"/>
<polyline fill="none" stroke="#000" stroke-width="2" points="10,1180 15,1186.700 20,1188 26.700,1175 33,1186 38,1188 43,1178 46.700,1186.700 51.700,1162.700 55,1168 61.700,1181.700 66.700,1183 80,1185 96.700,1194 113,1190.700 116.700,1185 121.700,1187 128,1189 133,1195 141.700,1181.700 148,1176.700 153,1186.700 165,1187 176.700,1192.700 203,1191.700 220,1194 230,1189 240,1190 246.700,1191.700 256.700,1198 266.700,1197 271.700,1191.700 286.700,1188 293,1191.700 320,1186.700 330,1186 360,1186.700 366.700,1191.700 375,1188 386.700,1193 396.700,1196 406.700,1186.700 420,1191.700 433,1186 458,1186.700 466.700,1178 480,1188 488,1190 497,1185.700 500,1186.700 510,1189 520,1187 530,1191 540,1192 550,1190 560,1193 570,1191 580,1194 590,1193 600,1196 608,1191 620,1186 630,1189 640,1188 644,1175 648,1162 651,1166 655,1160 660,1168 665,1172 672,1176 680,1178 690,1183 700,1182 710,1186 720,1183 730,1185 740,1187 750,1183 760,1182 770,1186 780,1188 790,1184 800,1188 810,1191 820,1187 830,1188 840,1190 850,1187 860,1192 870,1190 880,1193 890,1196 900,1200.700 906.700,1198 911.700,1191.700 916.700,1190 923,1185 930,1182.700 936.700,1185 943,1186.700 950,1185 958,1192.700 971.700,1189 981.700,1196 986.700,1191.700 993,1196 1000,1196 1006.700,1189 1016.700,1195.700 1033,1195"/>

<!-- labels -->
<g>
<rect x="8" y="164" width="491" height="32" fill="url(#gLab)"/><path d="M499,164 V197 H8" fill="none" stroke="#788e98" stroke-width="2"/>
<text x="14" y="186" textLength="376" lengthAdjust="spacingAndGlyphs">Curva guadagni e perdite: MY FRIEND</text>
<use href="#wrench" x="398" y="166"/><use href="#win" x="433" y="166"/><use href="#close" x="466" y="166"/>
<rect x="8" y="452" width="439" height="33" fill="url(#gLab)"/><path d="M447,452 V486 H8" fill="none" stroke="#788e98" stroke-width="2"/>
<text x="14" y="474" textLength="358" lengthAdjust="spacingAndGlyphs">ProBacktest - Posizioni: MY FRIEND</text>
<use href="#win" x="380" y="454"/><use href="#close" x="414" y="454"/>
<rect x="8" y="636" width="253" height="33" fill="url(#gLab)"/><path d="M261,636 V669 H8" fill="none" stroke="#788e98" stroke-width="2"/>
<text x="14" y="658" textLength="70" lengthAdjust="spacingAndGlyphs">Prezzo</text>
<use href="#wrench" x="92" y="638"/><use href="#win" x="126" y="638"/><use href="#close" x="160" y="638"/>
<path d="M195,639 H213 L220,646 V661 H195 Z" fill="#fff" stroke="#8da5bd" stroke-width="2"/><path d="M202,644 H211 V649 H215 L206.500,657 L198,649 H202 Z" fill="#ee2b2b"/>
<path d="M229,639 H247 L254,646 V661 H229 Z" fill="#fff" stroke="#8da5bd" stroke-width="2"/><path d="M236,657 H245 V651 H249 L240.500,643 L232,651 H236 Z" fill="#00c000"/>
<rect x="8" y="1098" width="365" height="33" fill="url(#gLab)"/><path d="M373,1098 V1131 H8" fill="none" stroke="#788e98" stroke-width="2"/>
<text x="14" y="1120" textLength="250" lengthAdjust="spacingAndGlyphs">Average True Range (22)</text>
<use href="#wrench" x="272" y="1100"/><use href="#win" x="306" y="1100"/><use href="#close" x="340" y="1100"/>
</g>

<!-- right axis -->
<rect x="1175" y="162" width="95" height="1042" fill="#fff"/>
<path stroke="#7b98a3" stroke-width="1.500" fill="none" d="M1175,162 V1203 M1176,194 H1184 M1176,264 H1184 M1176,299 H1184 M1176,334 H1184 M1176,368 H1184 M1176,402 H1184 M1176,432 H1184 M1176,497 H1184 M1176,540 H1184 M1176,581 H1184 M1176,624 H1184 M1176,656 H1184 M1176,712 H1184 M1176,763 H1184 M1176,817 H1184 M1176,870 H1184 M1176,976 H1184 M1176,1026 H1184 M1176,1082 H1184 M1176,1102 H1184 M1176,1120 H1184 M1176,1136 H1184 M1176,1154 H1184 M1176,1172 H1184 M1176,1191 H1184"/>
<path stroke="#ffa726" stroke-width="2.500" d="M1176,237 H1186"/>
<path stroke="#6ea3f8" stroke-width="2.500" d="M1176,465 H1186"/>
<text x="1188" y="202" textLength="78" lengthAdjust="spacingAndGlyphs">400.000</text>
<text x="1188" y="236" textLength="78" lengthAdjust="spacingAndGlyphs">350.000</text>
<text x="1188" y="272" textLength="78" lengthAdjust="spacingAndGlyphs">300.000</text>
<text x="1188" y="306" textLength="78" lengthAdjust="spacingAndGlyphs">250.000</text>
<text x="1188" y="342" textLength="78" lengthAdjust="spacingAndGlyphs">200.000</text>
<text x="1188" y="376" textLength="78" lengthAdjust="spacingAndGlyphs">150.000</text>
<text x="1188" y="410" textLength="78" lengthAdjust="spacingAndGlyphs">100.000</text>
<text x="1188" y="440" textLength="66" lengthAdjust="spacingAndGlyphs">50.000</text>
<rect x="1185" y="225" width="83" height="28" fill="url(#gTag)" stroke="#8aa4ae" stroke-width="2"/>
<text x="1188" y="246" textLength="78" lengthAdjust="spacingAndGlyphs" style="fill:#ffa726">340.149</text>
<text x="1188" y="504">50</text>
<text class="b" x="1188" y="548">0</text>
<text x="1188" y="588">-50</text>
<text x="1188" y="624">-100</text>
<text x="1188" y="461" textLength="66" lengthAdjust="spacingAndGlyphs" clip-path="url(#cut100)">100</text>
<rect x="1185" y="455" width="72" height="26" fill="url(#gTag)" stroke="#8aa4ae" stroke-width="2"/>
<text x="1188" y="474" textLength="66" lengthAdjust="spacingAndGlyphs" style="fill:#6ea3f8">90,950</text>
<text x="1188" y="664">1,6</text>
<text class="b" x="1188" y="720">1,5</text>
<text x="1188" y="770">1,4</text>
<text x="1188" y="824">1,3</text>
<path stroke="#3434ea" stroke-width="2" d="M1176,908 H1186 M1176,912 H1186 M1176,917 H1186 M1176,928 H1186 M1176,934 H1186"/>
<path stroke="#000" stroke-width="2" d="M1176,888 H1186"/>
<rect x="1185" y="860" width="84" height="29" fill="url(#gYel)" stroke="#8aa4ae" stroke-width="2"/>
<text x="1189" y="882" textLength="76" lengthAdjust="spacingAndGlyphs">1,16460</text>
<rect x="1185" y="892" width="84" height="18" fill="url(#gTag)" stroke="#8aa4ae" stroke-width="2"/>
<text x="1189" y="910" textLength="76" lengthAdjust="spacingAndGlyphs" style="fill:#4040e8">1,12300</text>
<rect x="1185" y="904" width="84" height="22" fill="url(#gTag)" stroke="#8aa4ae" stroke-width="2"/>
<text x="1189" y="924" textLength="76" lengthAdjust="spacingAndGlyphs" style="fill:#4040e8">1,11152</text>
<rect x="1185" y="924" width="84" height="26" fill="url(#gTag)" stroke="#8aa4ae" stroke-width="2"/>
<text x="1189" y="944" textLength="76" lengthAdjust="spacingAndGlyphs" style="fill:#4040e8">1,09215</text>
<text class="b" x="1188" y="984">1</text>
<text x="1188" y="1034">0,9</text>
<text x="1188" y="1086">0,8</text>
<text x="1188" y="1114">0,06</text>
<text x="1188" y="1142">0,04</text>
<text x="1188" y="1178">0,02</text>
<path stroke="#000" stroke-width="2" d="M1176,1196 H1186"/>
<rect x="1185" y="1172" width="72" height="29" fill="url(#gTag)" stroke="#8aa4ae" stroke-width="2"/>
<text x="1188" y="1194" textLength="66" lengthAdjust="spacingAndGlyphs" style="fill:#222">0,0064</text>

<!-- time axis -->
<path stroke="#8aa0aa" stroke-width="1.500" d="M96,1204V1211 M170,1204V1211 M242,1204V1211 M316,1204V1211 M386,1204V1211 M458,1204V1211 M532,1204V1211 M614,1204V1211 M700,1204V1211 M788,1204V1211 M876,1204V1211 M964,1204V1211 M1052,1204V1211 M1140,1204V1211"/>
<g text-anchor="middle"><text x="96" y="1234">1994</text><text x="170" y="1234">1996</text><text x="242" y="1234">1998</text><text x="316" y="1234">2000</text><text x="386" y="1234">2002</text><text x="458" y="1234">2004</text><text x="532" y="1234">2006</text><text x="614" y="1234">2008</text><text x="700" y="1234">2010</text><text x="788" y="1234">2012</text><text x="876" y="1234">2014</text><text x="964" y="1234">2016</text><text x="1052" y="1234">2018</text><text x="1140" y="1234">2020</text></g>

<!-- bottom bar -->
<rect x="6" y="1243" width="1264" height="59" fill="url(#gBot)"/>
<rect x="6" y="1242" width="1264" height="2" fill="#8aa2ac"/>
<rect x="17" y="1264" width="30" height="25" rx="2" fill="#fff" stroke="#1a56c8" stroke-width="2.500"/>
<path d="M20,1287 L27,1275 L31,1280 L37,1271" fill="none" stroke="#d02020" stroke-width="1.600"/>
<path d="M19,1289 L30,1270" fill="none" stroke="#18a818" stroke-width="1.600"/>
<path d="M24,1288 C25,1272 31,1266 41,1265 V1257 L52,1268 L41,1279 V1272 C33,1272 28,1278 24,1288 Z" fill="#7fe07f" stroke="#2aa82a" stroke-width="1.500"/>
<path d="M37,1286 H53 L45,1294 Z" fill="#000" stroke="#fff" stroke-width="1.500"/>
<rect x="67" y="1259" width="15" height="19" rx="7" fill="#fff" stroke="#000" stroke-width="3.200"/>
<rect x="67" y="1273" width="15" height="19" rx="7" fill="none" stroke="#000" stroke-width="3.200"/>
<path d="M74.500,1266 V1285" stroke="#000" stroke-width="3.500"/>
<path d="M93,1264 V1289 M105,1255 V1286" stroke="#2a9a2a" stroke-width="1.500"/>
<rect x="89" y="1268" width="9" height="12" fill="#ee8484" stroke="#a02020" stroke-width="1.500"/>
<rect x="101" y="1261" width="8" height="16" fill="#58d858" stroke="#0d8a0d" stroke-width="1.500"/>
<path d="M92,1285 H108 L100,1293 Z" fill="#000" stroke="#fff" stroke-width="1.500"/>
<rect x="131" y="1261.500" width="24.500" height="27" fill="#fff" stroke="#000" stroke-width="2"/>
<path d="M146,1261 H155 V1268 Z" fill="#ee8484"/>
<path d="M132,1288 L139,1280 L147,1288 Z" fill="#5ad05a"/>
<path d="M133,1268 L141,1268 L147,1272 H133 Z M133,1274 H152 V1278 H139 Z M141,1282 H154 V1285 H145 Z" fill="#000"/>
<g stroke="#6b6b6b" stroke-width="2">
<rect x="185" y="1261" width="15" height="6" fill="#56cc56"/><rect x="200" y="1261" width="7" height="6" fill="#f08c88"/>
<rect x="188" y="1267" width="12" height="6" fill="#56cc56"/><rect x="200" y="1267" width="15" height="6" fill="#f08c88"/>
<rect x="188" y="1273" width="12" height="6" fill="#56cc56"/><rect x="200" y="1273" width="12" height="6" fill="#f08c88"/>
<rect x="188" y="1279" width="12" height="6" fill="#56cc56"/><rect x="200" y="1279" width="15" height="6" fill="#f08c88"/>
<rect x="185" y="1285" width="15" height="6" fill="#56cc56"/><rect x="200" y="1285" width="6" height="6" fill="#f08c88"/>
</g>
<!-- scrollbar -->
<rect x="233" y="1263" width="810" height="29" rx="7" fill="#98b5c1" stroke="#7f9aa6" stroke-width="2"/>
<rect x="233" y="1263" width="30" height="29" rx="7" fill="url(#gBtn)" stroke="#7f9aa6" stroke-width="2"/>
<rect x="469" y="1263" width="541" height="29" rx="7" fill="url(#gBtn)" stroke="#7f9aa6" stroke-width="2"/>
<rect x="1013" y="1263" width="30" height="29" rx="7" fill="url(#gBtn)" stroke="#7f9aa6" stroke-width="2"/>
<path d="M244,1277 L249,1272 V1282 Z" fill="#222"/><path d="M1032,1277 L1027,1272 V1282 Z" fill="#222"/>
<path d="M734,1273.500 H747 M734,1277 H747 M734,1280.500 H747" stroke="#7a94a0" stroke-width="1.200"/>
<!-- wrench candle -->
<path d="M1063,1273 V1296 M1079,1256 V1296" stroke="#555" stroke-width="1.500"/>
<rect x="1057" y="1277" width="12" height="14" fill="#ee8a88" stroke="#555" stroke-width="2"/>
<rect x="1073" y="1261" width="12" height="30" fill="#58d858" stroke="#555" stroke-width="2"/>
<path d="M1060,1287 L1070,1278 C1069,1271 1073,1265 1080,1265 L1076,1270 L1078,1273 L1083,1271 L1083,1275 C1081,1279 1077,1281 1073,1281 L1064,1290 C1061,1291 1059,1289 1060,1287 Z" fill="#fff" stroke="#000" stroke-width="1.800" stroke-linejoin="round"/>
<!-- magnifier -->
<circle cx="1123" cy="1273" r="11" fill="url(#gGlass)" stroke="#000" stroke-width="2.500"/>
<path d="M1131,1281 L1143,1292" stroke="#000" stroke-width="4.500" stroke-linecap="round"/>
<path d="M1141,1261 V1280 M1137,1265 L1141,1260 L1145,1265 M1137,1277 L1141,1282 L1145,1277 M1111,1289 H1126 M1114,1285 L1110,1289 L1114,1293 M1123,1285 L1127,1289 L1123,1293" fill="none" stroke="#0808ee" stroke-width="2"/>
<circle cx="1181" cy="1272" r="12" fill="#fff" stroke="#000" stroke-width="2.500"/>
<path d="M1174.500,1272 H1187.500" stroke="#1818d8" stroke-width="3.600"/>
<path d="M1190,1281 L1198,1292" stroke="#000" stroke-width="4.500" stroke-linecap="round"/>
<circle cx="1236" cy="1272" r="12" fill="#fff" stroke="#000" stroke-width="2.500"/>
<path d="M1229.500,1272 H1242.500 M1236,1265.500 V1278.500" stroke="#1818d8" stroke-width="3.600"/>
<path d="M1245,1281 L1254,1292" stroke="#000" stroke-width="4.500" stroke-linecap="round"/>
</svg>
</body></html>
